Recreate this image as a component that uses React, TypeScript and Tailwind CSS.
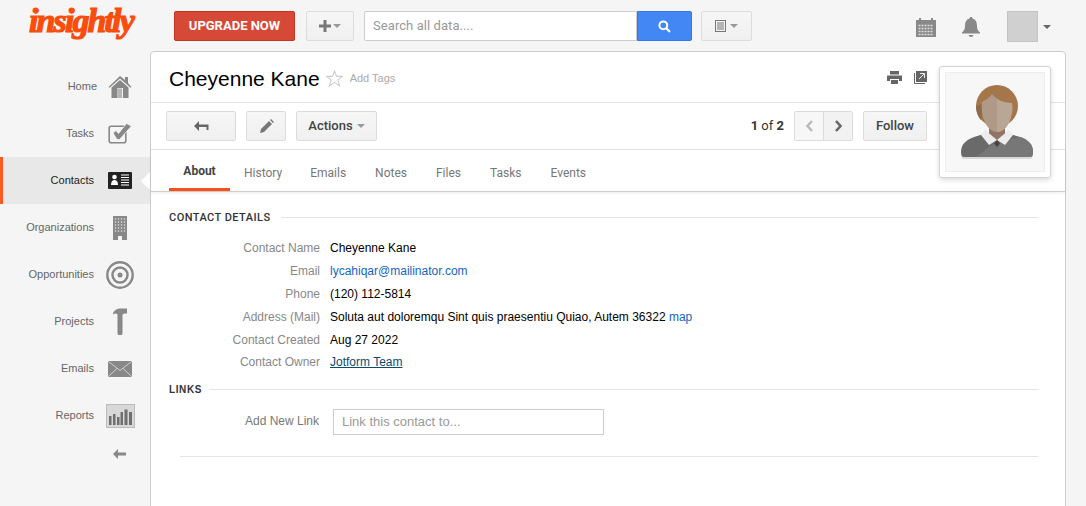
import React from "react";

const Caret = ({ c = "#999" }: { c?: string }) => (
  <svg width="8" height="4" viewBox="0 0 8 4" className="shrink-0"><path d="M0 0h8L4 4z" fill={c} /></svg>
);

const g = "#888";
const icons: Record<string, React.ReactNode> = {
  Home: (
    <svg width="24" height="24" viewBox="0 0 24 24"><path d="M12 1 17 5V2h3v6l3.500 4-1 .7L12 3.500 1.500 12.700l-1-.7z" fill={g} /><path d="M3.500 12.500 12 5l8.500 7.500V23H15V13H9.500V23h-6z" fill={g} /><rect x="10" y="13.500" width="4" height="9.500" fill="#b5b5b5" /></svg>
  ),
  Tasks: (
    <svg width="24" height="24" viewBox="0 0 24 24"><rect x="1.200" y="4.200" width="16.600" height="16.600" rx="2" fill="none" stroke={g} strokeWidth="1.600" /><path d="M5 11l3-2.500 2.500 3L18.500 1.500 23.500 4 11.500 17.500H9z" fill={g} stroke="#f5f5f5" strokeWidth=".8" /></svg>
  ),
  Contacts: (
    <svg width="24" height="17" viewBox="0 0 24 17"><rect width="24" height="17" rx="1" fill="#222" /><circle cx="6.500" cy="5" r="2.300" fill="#fff" /><path d="M3 13c0-3.500 1.500-5 3.500-5s3.500 1.500 3.500 5z" fill="#fff" /><path d="M13 3h8M13 5.500h8M13 8h8M13 10.500h8M13 13h8" stroke="#fff" strokeWidth="1.100" /></svg>
  ),
  Organizations: (
    <svg width="14" height="24" viewBox="0 0 14 24"><path d="M0 0h14v24H9v-4H5v4H0z" fill={g} /><path d="M2.500 2v15M5.500 2v15M8.500 2v15M11.500 2v15" stroke="#c4c4c4" strokeWidth="1.300" strokeDasharray="2 1" /></svg>
  ),
  Opportunities: (
    <svg width="28" height="28" viewBox="0 0 28 28"><circle cx="14" cy="14" r="12.700" fill="none" stroke={g} strokeWidth="2.400" /><circle cx="14" cy="14" r="7.500" fill="none" stroke={g} strokeWidth="2.400" /><circle cx="14" cy="14" r="2.500" fill={g} /></svg>
  ),
  Projects: (
    <svg width="16" height="27" viewBox="0 0 16 27"><path d="M1 5C2.500 2 5 .5 8 .5H15V5.500H12.500L10.500 6.500V25.500a1.500 1.500 0 0 1-1.500 1.500H7a1.500 1.500 0 0 1-1.500-1.500V6.500C4 5 3 5 1 6.500z" fill={g} /></svg>
  ),
  Emails: (
    <svg width="24" height="16" viewBox="0 0 24 16"><rect width="24" height="16" fill={g} /><path d="M0 .2 12 9.500 24 .2M0 15.800 9 7.500M24 15.800 15 7.500" fill="none" stroke="#d8d8d8" strokeWidth=".9" /></svg>
  ),
  Reports: (
    <svg width="29" height="24" viewBox="0 0 29 24"><rect x=".5" y=".5" width="28" height="23" fill="#d8d8d8" stroke="#bbb" /><path d="M3 12h2.500v9H3zM7 10h2.500v11H7zM11 13h2.500v8H11zM14.500 8h2.500v13h-2.500zM18.500 5.500h3V21h-3zM23 8h3v13h-3z" fill="#6f6f6f" /></svg>
  ),
};

const nav = ["Home", "Tasks", "Contacts", "Organizations", "Opportunities", "Projects", "Emails", "Reports"];

const Details: [string, React.ReactNode][] = [
  ["Contact Name", "Cheyenne Kane"],
  ["Email", <a className="text-[#1565c0]">lycahiqar@mailinator.com</a>],
  ["Phone", "(120) 112-5814"],
  ["Address (Mail)", <>Soluta aut doloremqu Sint quis praesentiu Quiao, Autem 36322 <a className="text-[#1565c0]">map</a></>],
  ["Contact Created", "Aug 27 2022"],
  ["Contact Owner", <a className="text-[#0b4a6f] underline">Jotform Team</a>],
];

const tabs = ["About", "History", "Emails", "Notes", "Files", "Tasks", "Events"];

const btn = "h-[30px] flex items-center justify-center rounded-[2px] border border-[#dcdcdc] bg-gradient-to-b from-[#f6f6f6] to-[#f0f0f0]";

export default function App() {
  return (
    <div className="h-[506px] w-[1086px] overflow-hidden bg-[#f5f5f5] font-['Liberation_Sans',Arial,sans-serif] text-[12px] text-[#666]">
      <header className="h-[51px] flex items-start">
        <div className="w-[174px] pl-[29px] h-[51px] relative shrink-0">
          <span className="block text-[#fa4c0a] italic font-bold text-[34px] leading-[42px] tracking-[-1.900px] font-['Liberation_Serif',serif] [-webkit-text-stroke:1.200px_#fa4c0a]">insightly</span>
        </div>
        <div className="mt-[11px] w-[121px] h-[30px] flex items-center justify-center bg-[#d64937] border border-[#c23321] rounded-[2px] text-white font-bold text-[13px] font-['Roboto',sans-serif] shrink-0">UPGRADE NOW</div>
        <div className={`${btn} mt-[11px] ml-[11px] w-[48px] gap-[2px]`}>
          <svg width="12" height="12" viewBox="0 0 12 12"><path d="M4.500 0h3v4.500H12v3H7.500V12h-3V7.500H0v-3h4.500z" fill="#777" /></svg>
          <Caret />
        </div>
        <div className="mt-[11px] ml-[10px] w-[273px] h-[30px] bg-white border border-[#ccc] rounded-l-[2px] flex items-center pl-[8px] text-[13px] tracking-[.07px] text-[#999] font-['Roboto',sans-serif]">Search all data....</div>
        <div className="mt-[11px] w-[55px] h-[30px] bg-[#4387f5] border border-[#3079ed] rounded-r-[2px] flex items-center justify-center">
          <svg width="13" height="13" viewBox="0 0 13 13"><circle cx="5.300" cy="5.300" r="3.900" fill="none" stroke="#fff" strokeWidth="2" /><path d="M8.300 8.300 12 12" stroke="#fff" strokeWidth="2.200" /></svg>
        </div>
        <div className={`${btn} mt-[11px] ml-[9px] w-[51px] gap-[3px]`}>
          <svg width="12" height="12" viewBox="0 0 12 12"><rect x=".5" y=".5" width="10" height="11" fill="none" stroke="#777" /><path d="M2 3h7M2 5h7M2 7h7M2 9h7" stroke="#777" /></svg>
          <Caret />
        </div>
        <div className="flex-1" />
        <svg className="mt-[17px]" width="20" height="20" viewBox="0 0 20 20"><path d="M0 3h3V1h2v2h10V1h2v2h3v17H0z" fill="#888" /><path d="M2.500 8.500h15M2.500 11.500h15M2.500 14.500h15M2.500 17.500h15" stroke="#ddd" strokeWidth="1.400" strokeDasharray="2 1" /></svg>
        <svg className="mt-[17px] ml-[26px]" width="18" height="20" viewBox="0 0 18 20"><path d="M9 0c1 0 1.500.7 1.500 1.500C14 2.500 15 5.500 15 9c0 3 1 5 3 6.500V16.500H0v-1C2 14 3 12 3 9c0-3.500 1-6.500 4.500-7.500C7.500.7 8 0 9 0z" fill="#888" /><path d="M6.500 18h5c-.5 1.300-1.300 2-2.500 2s-2-.7-2.500-2z" fill="#888" /></svg>
        <div className="mt-[11px] ml-[27px] w-[31px] h-[31px] bg-[#d0d0d0] border border-[#c4c4c4]" />
        <div className="mt-[25px] ml-[5px] mr-[35px]"><Caret c="#666" /></div>
      </header>

      <div className="flex">
        <aside className="w-[150px] shrink-0 pt-[12px] flex flex-col">
          {nav.map((n) => {
            const active = n === "Contacts";
            return (
              <div key={n} className={`relative h-[47px] flex items-center ${active ? "bg-[#e8e8e8] border-l-[3px] border-[#ff5a1f]" : ""}`}>
                <span className={`${active ? "w-[91px] text-[#222]" : "w-[94px]"} text-right text-[11px] ${n === "Home" ? "translate-x-[3px]" : ""}`}>{n}</span>
                <span className="w-[52px] flex items-center justify-center">{icons[n]}</span>
                {active && <span className="absolute right-0 top-[15px] w-0 h-0 border-y-[9px] border-y-transparent border-r-[9px] border-r-white" />}
              </div>
            );
          })}
          <div className="h-[30px] flex items-center pl-[113px]">
            <svg width="13" height="10" viewBox="0 0 13 10"><path d="M5 0v3.500h8v3H5V10L0 5z" fill="#888" /></svg>
          </div>
        </aside>

        <main className="relative w-[916px] h-[460px] bg-white border border-[#ccc] rounded-t-[4px]">
          <div className="h-[51px] flex items-center border-b border-[#e4e4e4] pl-[18px] pr-[138px] pt-[2px]">
            <h1 className="text-[21px] text-black leading-none">Cheyenne Kane</h1>
            <svg className="ml-[6px]" width="17" height="17" viewBox="0 0 24 24"><path d="M12 1.500 15 9h8l-6.300 5 2.500 8.500L12 17.500l-7.200 5L7.300 14 1 9h8z" fill="none" stroke="#ccc" strokeWidth="1.500" /></svg>
            <span className="ml-[7px] text-[11px] text-[#aaa]">Add Tags</span>
            <div className="flex-1" />
            <svg className="mb-[2px]" width="15" height="13" viewBox="0 0 15 13"><path d="M3 0h9v3.500H3zM0 4.500h15V10h-3V8H3v2H0zM4 9h7v4H4z" fill="#666" /></svg>
            <svg className="ml-[12px] mb-[2px]" width="13" height="13" viewBox="0 0 13 13"><rect width="11" height="11" x="2" fill="#666" /><path d="M.5 2v10.500H11" fill="none" stroke="#666" /><path d="M5 8l5-5M6 2.500H10.500V7" stroke="#eee" fill="none" /></svg>
          </div>
          <div className="h-[47px] flex items-center border-b border-[#e4e4e4] pl-[15px]">
            <div className={`${btn} w-[70px]`}>
              <svg width="15" height="10" viewBox="0 0 15 10"><path d="M5 0v3.500h9.500V9H12.500V6H5v4L0 5z" fill="#666" /></svg>
            </div>
            <div className={`${btn} w-[40px] ml-[10px]`}>
              <svg width="15" height="15" viewBox="0 0 15 15"><path d="M1 14l1-4 8-8 3 3-8 8zM11 1l1-1 3 3-1 1z" fill="#777" /></svg>
            </div>
            <div className={`${btn} w-[81px] ml-[10px] gap-[4px] font-medium text-[#444] text-[13px] font-['Roboto',sans-serif]`}>Actions <Caret /></div>
            <div className="flex-1" />
            <span className="text-[#333] text-[13px] mr-[10px] font-['Roboto',sans-serif]"><b>1</b> of <b>2</b></span>
            <div className="flex h-[30px] rounded-[2px] border border-[#dcdcdc]">
              <div className="w-[29px] flex items-center justify-center bg-[#f7f7f7] border-r border-[#dcdcdc]">
                <svg width="9" height="12" viewBox="0 0 9 12"><path d="M7 1 2.500 6 7 11" fill="none" stroke="#bbb" strokeWidth="2.600" /></svg>
              </div>
              <div className="w-[28px] flex items-center justify-center bg-[#f2f2f2]">
                <svg width="9" height="12" viewBox="0 0 9 12"><path d="M2 1l4.500 5L2 11" fill="none" stroke="#666" strokeWidth="2.600" /></svg>
              </div>
            </div>
            <div className={`${btn} w-[64px] ml-[10px] mr-[138px] font-medium text-[#444] text-[13px] font-['Roboto',sans-serif]`}>Follow</div>
          </div>
          <nav className="h-[42px] flex border-b border-[#ccc] shadow-[0_1px_3px_rgba(0,0,0,.08)] pl-[18px]">
            {tabs.map((t, i) => (
              <div key={t} className={`h-[41px] flex items-center justify-center font-['Roboto',sans-serif] ${i === 0 ? "w-[61px] text-[#444] font-bold border-b-[3px] border-[#f4511e] text-[12px] mr-[14px] pt-[3px]" : `text-[#777] pt-[4px] ${i === 1 ? "mr-[28px]" : "mr-[29px]"}`}`}>{t}</div>
            ))}
          </nav>

          <section className="pl-[18px] pr-[27px]">
            <div className="flex items-center h-[16px] mt-[18px] gap-[10px]">
              <span className="text-[11px] font-['Roboto',sans-serif] font-medium tracking-[.45px] text-[#333]">CONTACT DETAILS</span>
              <span className="flex-1 border-t border-[#e4e4e4] mb-[2px]" />
            </div>
            <div className="mt-[11px] flex flex-col">
              {Details.map(([k, v]) => (
                <div key={k} className="flex h-[22.800px] items-center">
                  <span className="w-[151px] text-right text-[#888]">{k}</span>
                  <span className="ml-[10px] text-black">{v}</span>
                </div>
              ))}
            </div>
            <div className="flex items-center h-[16px] mt-[8px] gap-[8px]">
              <span className="text-[10px] font-bold tracking-[.6px] text-[#333]">LINKS</span>
              <span className="flex-1 border-t border-[#e4e4e4]" />
            </div>
            <div className="flex items-center mt-[11px]">
              <span className="w-[150px] text-right text-[#777] mb-[2px]">Add New Link</span>
              <div className="ml-[14px] w-[271px] h-[26px] border border-[#ccc] flex items-center pl-[8px] text-[13px] text-[#999]">Link this contact to...</div>
            </div>
            <div className="mt-[21px] ml-[11px] border-t border-[#e4e4e4]" />
          </section>

          <div className="absolute left-[788px] top-[14px] w-[112px] h-[112px] bg-white border border-[#d4d4d4] rounded-[3px] p-[5px] shadow-[0_2px_5px_rgba(0,0,0,.15)]">
            <div className="w-full h-full bg-[#f7f7f7] border border-[#eee] flex items-center justify-center">
              <svg width="76" height="76" viewBox="0 0 76 76" className="shrink-0">
                <path d="M4 70C4 62 9 58 17 55L30 51H50L63 55C71 58 76 62 76 70C76 73 75 75 73 75H7C5 75 4 73 4 70z" fill="#000" opacity=".12" />
                <path d="M4 68C4 60 9 56 17 53L30 49H50L63 53C71 56 76 60 76 68C76 71 75 73 73 73H7C5 73 4 71 4 68z" fill="#6a6a6a" />
                <path d="M19 73 40 57 64 53C71 56 76 60 76 68C76 71 75 73 73 73z" fill="#777" />
                <circle cx="40" cy="22" r="21" fill="#a5764a" />
                <path d="M19 22C19 28 21 33 24 36L26 20z" fill="#8f6a48" />
                <path d="M32 42h16v10l-8 6-8-6z" fill="#8f7565" />
                <path d="M25 18C29 16 33 13 35 10 39 15 46 19 55 19 56 24 55 30 53 36 50 44 45 48 40 48 35 48 30 44 27 36 25 30 24 24 25 18z" fill="#b09a87" />
                <path d="M40 15.500C44 17.800 49 19 55 19 56 24 55 30 53 36 50 44 45 48 40 48z" fill="#b9a695" />
                <path d="M24 51 28 46 40 56 32 61zM56 51 52 46 40 56 48 61z" fill="#ececec" />
                <path d="M40 56 43 59.500 40 63 37 59.500z" fill="#444" />
              </svg>
            </div>
          </div>
        </main>
      </div>
    </div>
  );
}
